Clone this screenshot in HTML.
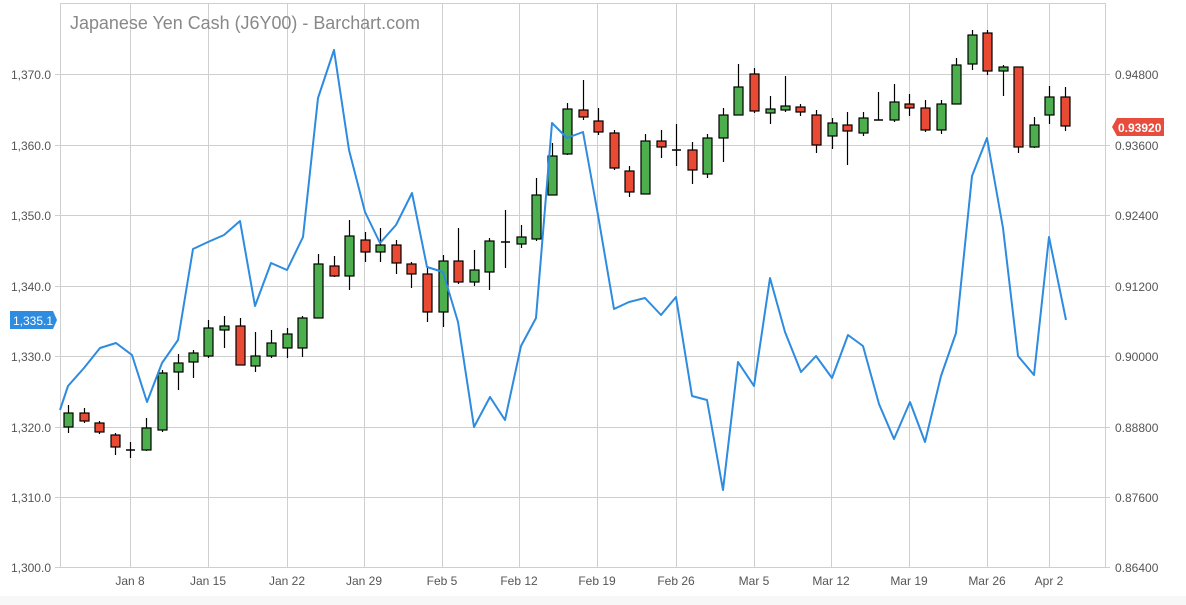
<!DOCTYPE html>
<html><head><meta charset="utf-8"><style>
html,body{margin:0;padding:0;background:#fff;width:1186px;height:605px;overflow:hidden}
svg{display:block;font-family:"Liberation Sans",sans-serif}
</style></head><body>
<svg id="c" width="1186" height="605" xmlns="http://www.w3.org/2000/svg">
<rect x="0" y="596" width="1186" height="9" fill="#f7f7f7"/>
<g stroke="#cfcfcf" stroke-width="1">
<line x1="60.5" y1="3" x2="60.5" y2="567"/>
<line x1="1105.5" y1="3" x2="1105.5" y2="567"/>
<line x1="60" y1="3.5" x2="1105" y2="3.5"/>
<line x1="130.5" y1="3" x2="130.5" y2="567"/><line x1="208.5" y1="3" x2="208.5" y2="567"/>
<line x1="287.5" y1="3" x2="287.5" y2="567"/><line x1="364.5" y1="3" x2="364.5" y2="567"/>
<line x1="442.5" y1="3" x2="442.5" y2="567"/><line x1="519.5" y1="3" x2="519.5" y2="567"/>
<line x1="597.5" y1="3" x2="597.5" y2="567"/><line x1="676.5" y1="3" x2="676.5" y2="567"/>
<line x1="754.5" y1="3" x2="754.5" y2="567"/><line x1="831.5" y1="3" x2="831.5" y2="567"/>
<line x1="909.5" y1="3" x2="909.5" y2="567"/><line x1="987.5" y1="3" x2="987.5" y2="567"/>
<line x1="1049.5" y1="3" x2="1049.5" y2="567"/>
<line x1="55" y1="74.5" x2="1110" y2="74.5"/><line x1="55" y1="145.5" x2="1110" y2="145.5"/>
<line x1="55" y1="215.5" x2="1110" y2="215.5"/><line x1="55" y1="286.5" x2="1110" y2="286.5"/>
<line x1="55" y1="356.5" x2="1110" y2="356.5"/><line x1="55" y1="427.5" x2="1110" y2="427.5"/>
<line x1="55" y1="497.5" x2="1110" y2="497.5"/><line x1="55" y1="567.5" x2="1110" y2="567.5"/>
</g>
<text x="70" y="29" font-size="18" fill="#888" textLength="350" lengthAdjust="spacingAndGlyphs">Japanese Yen Cash (J6Y00) - Barchart.com</text>
<g font-size="12" fill="#555" text-anchor="end">
<text x="51" y="79">1,370.0</text><text x="51" y="150">1,360.0</text><text x="51" y="220">1,350.0</text>
<text x="51" y="291">1,340.0</text><text x="51" y="361">1,330.0</text><text x="51" y="432">1,320.0</text>
<text x="51" y="502">1,310.0</text><text x="51" y="572">1,300.0</text>
</g>
<g font-size="12" fill="#555">
<text x="1115" y="79">0.94800</text><text x="1115" y="150">0.93600</text><text x="1115" y="220">0.92400</text>
<text x="1115" y="291">0.91200</text><text x="1115" y="361">0.90000</text><text x="1115" y="432">0.88800</text>
<text x="1115" y="502">0.87600</text><text x="1115" y="572">0.86400</text>
</g>
<g font-size="12" fill="#555" text-anchor="middle">
<text x="130" y="585">Jan 8</text><text x="208" y="585">Jan 15</text><text x="287" y="585">Jan 22</text>
<text x="364" y="585">Jan 29</text><text x="442" y="585">Feb 5</text><text x="519" y="585">Feb 12</text>
<text x="597" y="585">Feb 19</text><text x="676" y="585">Feb 26</text><text x="754" y="585">Mar 5</text>
<text x="831" y="585">Mar 12</text><text x="909" y="585">Mar 19</text><text x="987" y="585">Mar 26</text>
<text x="1049" y="585">Apr 2</text>
</g>
<g id="cd"></g>
<polyline id="bl" fill="none" stroke="#2d8be0" stroke-width="2" stroke-linejoin="round"/>
<path d="M10 311 H53 L57 320 L53 329 H10 Z" fill="#2d8be0"/>
<text x="13" y="325" font-size="12" fill="#fff">1,335.1</text>
<path d="M1117 118 H1164 V136 H1117 L1112 127 Z" fill="#e84c3d"/>
<text x="1118" y="132" font-size="12" font-weight="bold" fill="#fff">0.93920</text>
</svg>
<script>
var C=[[68,'g',413,427,405,433],[84,'r',413,421,408,423],[99,'r',423,432,421,434],[115,'r',435,447,433,455],[130,'d',450,450,442,458],[146,'g',428,450,418,451],[162,'g',373,430,370,432],[178,'g',363,372,354,390],[193,'g',353,362,350,378],[208,'g',328,356,320,358],[224,'g',326,330,316,348],[240,'r',326,365,318,365],[255,'g',356,366,332,372],[271,'g',343,356,330,358],[287,'g',334,348,328,358],[302,'g',318,348,316,357],[318,'g',264,318,254,318],[334,'r',266,276,256,277],[349,'g',236,276,220,290],[365,'r',240,252,232,262],[380,'g',245,252,228,262],[396,'r',245,263,240,274],[411,'r',264,274,262,288],[427,'r',274,312,268,322],[443,'g',261,312,255,327],[458,'r',261,282,228,284],[474,'g',270,282,250,286],[489,'g',241,272,238,290],[505,'d',242,242,210,268],[521,'g',237,244,225,248],[536,'g',195,239,178,241],[552,'g',156,195,143,195],[567,'g',109,154,103,155],[583,'r',110,117,80,120],[598,'r',121,132,108,135],[614,'r',133,168,130,170],[629,'r',171,192,166,197],[645,'g',141,194,134,194],[661,'r',141,147,130,158],[676,'d',150,150,124,166],[692,'r',150,170,142,184],[707,'g',138,174,134,178],[723,'g',115,138,108,162],[738,'g',87,115,64,115],[754,'r',74,111,68,113],[770,'g',109,113,96,124],[785,'g',106,110,76,112],[800,'r',107,112,104,116],[816,'r',115,145,110,153],[832,'g',123,136,118,149],[847,'r',125,131,112,165],[863,'g',118,133,112,136],[878,'d',120,120,92,120],[894,'g',102,120,84,122],[909,'r',104,108,94,116],[925,'r',108,130,100,132],[941,'g',104,130,100,134],[956,'g',65,104,58,104],[972,'g',35,64,30,70],[987,'r',33,71,30,75],[1003,'g',67,71,65,96],[1018,'r',67,147,67,153],[1034,'g',125,147,117,148],[1049,'g',97,115,86,124],[1065,'r',97,126,87,131]];
var s='';C.forEach(function(c){var x=c[0];s+='<line x1="'+(x+.5)+'" y1="'+c[4]+'" x2="'+(x+.5)+'" y2="'+c[5]+'" stroke="#000" stroke-width="1.2"/>';
if(c[1]=='d'){s+='<line x1="'+(x-4)+'" y1="'+c[2]+'" x2="'+(x+5)+'" y2="'+c[2]+'" stroke="#000" stroke-width="1.5"/>';}
else{s+='<rect x="'+(x-4)+'" y="'+c[2]+'" width="9" height="'+Math.max(2,c[3]-c[2])+'" fill="'+(c[1]=='g'?'#4cae4c':'#e84a33')+'" stroke="#000" stroke-width="1.2"/>';}});
document.getElementById('cd').innerHTML=s;
var P=[[60,410],[68,386],[84,368],[100,348],[116,343],[132,355],[147,402],[162,363],[178,340],[193,249],[208,242],[224,235],[240,221],[255,306],[271,263],[287,270],[303,237],[318,98],[334,50],[349,150],[365,212],[380,243],[396,225],[412,193],[427,267],[443,272],[458,322],[474,427],[490,397],[505,420],[521,346],[536,318],[552,123],[567,138],[583,132],[598,215],[614,309],[629,302],[645,298],[661,315],[676,297],[692,396],[707,400],[723,490],[738,362],[754,386],[770,278],[785,332],[801,372],[816,356],[832,378],[848,335],[863,346],[879,404],[894,439],[910,402],[925,442],[941,376],[956,333],[972,176],[987,138],[1003,228],[1018,356],[1034,375],[1049,237],[1066,320]];
document.getElementById('bl').setAttribute('points',P.map(function(p){return p.join(',')}).join(' '));
</script>
</body></html>
